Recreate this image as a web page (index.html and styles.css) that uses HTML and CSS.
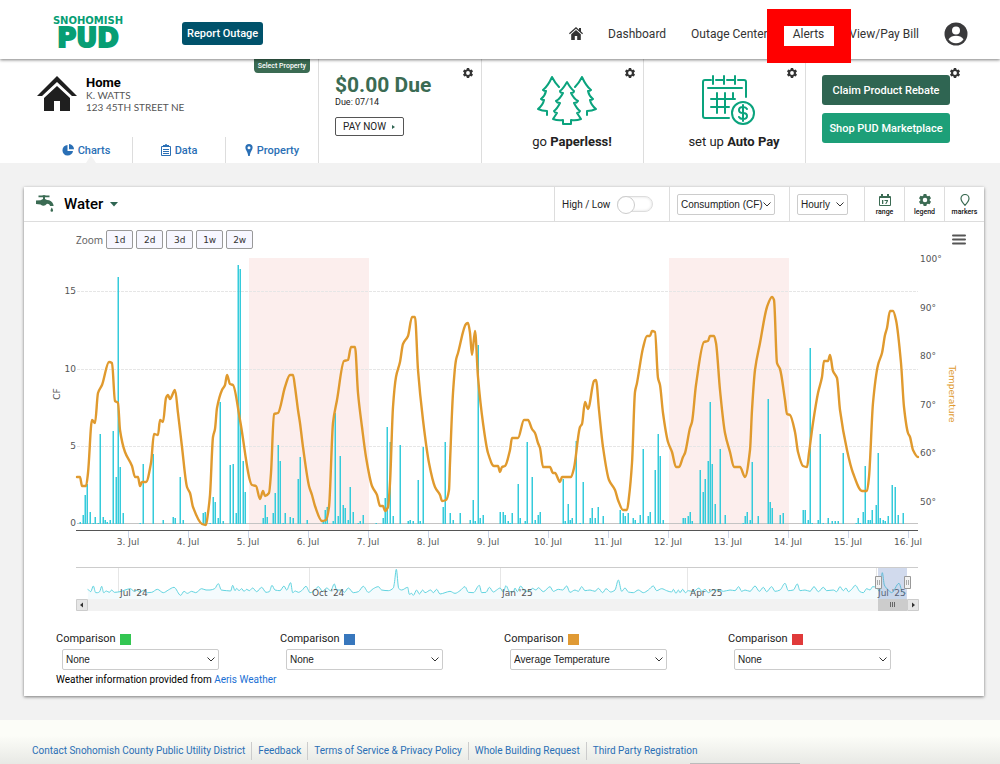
FILE: index.html
```
<!DOCTYPE html>
<html lang="en">
<head>
    <meta charset="UTF-8">
    <meta name="viewport" content="width=device-width, initial-scale=1.0">
    <title>Snohomish PUD - Charts</title>
    <link rel="stylesheet" href="styles.css">
</head>
<body>
    <header class="topbar">
        <a class="logo" href="#">
            <span class="logo-top">SNOHOMISH</span>
            <span class="logo-main">PUD</span>
        </a>
        <button class="report" type="button">Report Outage</button>
        <nav class="main-nav">
            <a href="#" aria-label="Home page">
                <svg width="14" height="13" viewBox="0 0 14 13"><path fill="#333" d="M7 0 0 6.3l.8.9L7 1.8l6.200 5.400.8-.9-2-1.800V.9h-2v1.800zM2.200 7.200V13h3.600V9h2.400v4h3.600V7.200L7 3z"/></svg>
            </a>
            <a href="#">Dashboard</a>
            <a href="#">Outage Center</a>
            <a class="alerts" href="#">Alerts</a>
            <a href="#">View/Pay Bill</a>
            <a class="avatar" href="#" aria-label="Account">
                <svg width="24" height="24" viewBox="0 0 24 24"><circle cx="12" cy="12" r="11.500" fill="#3a3a3c"/><circle cx="12" cy="8.500" r="4" fill="#fff"/><path fill="#fff" d="M4.500 17.300c1.600-2.500 4.500-3.500 7.500-3.500s5.900 1 7.500 3.500c-1.700 2.500-4.400 4-7.500 4s-5.800-1.500-7.500-4z"/></svg>
            </a>
        </nav>
    </header>

    <section class="summary">
        <div class="property">
            <button class="select-property" type="button">Select Property</button>
            <div class="address">
                <svg width="40" height="36" viewBox="0 0 40 36"><path fill="#1f1f1f" d="M20 0 0 20h5L20 6l15 14h5zM20 10 7 22v13h10V25h6v10h10V22z"/></svg>
                <div>
                    <h1>Home</h1>
                    <p>K. WATTS</p>
                    <p>123 45TH STREET NE</p>
                </div>
            </div>
            <nav class="tabs">
                <a class="active" href="#">
                    <svg width="12" height="12" viewBox="0 0 12 12"><path fill="#2a6fb5" d="M5.500 1A5.300 5.300 0 1 0 11 6.900H5.500zM7 0v5.300h5A5.200 5.200 0 0 0 7 0z"/></svg>
                    Charts
                </a>
                <a href="#">
                    <svg width="10" height="12" viewBox="0 0 10 12"><path fill="none" stroke="#2a6fb5" d="M.5 2.500h9v9h-9zM2 5.500h6M2 7.500h6M2 9.500h6"/><path fill="#2a6fb5" d="M2 1h2a1 1 0 0 1 2 0h2v2H2z"/></svg>
                    Data
                </a>
                <a href="#">
                    <svg width="8" height="12" viewBox="0 0 8 12"><path fill="#2a6fb5" fill-rule="evenodd" d="M4 0a3.600 3.600 0 0 0-3.600 3.700C.4 6 3 8 3.200 12h1.600C5 8 7.600 6 7.600 3.700A3.600 3.600 0 0 0 4 0zm0 2.200a1.500 1.500 0 1 1 0 3 1.500 1.500 0 0 1 0-3z"/></svg>
                    Property
                </a>
            </nav>
        </div>
        <div class="tile due">
            <button class="gear" type="button" aria-label="Bill settings"><svg width="10" height="10" viewBox="0 0 10 10"><use href="#gear"/></svg></button>
            <h2>$0.00 Due</h2>
            <p>Due: 07/14</p>
            <button class="pay" type="button">PAY NOW <svg width="4" height="4" viewBox="0 0 4 4"><path fill="#2f6552" d="M0 0l3 2-3 2z"/></svg></button>
        </div>
        <div class="tile promo">
            <button class="gear" type="button" aria-label="Paperless settings"><svg width="10" height="10" viewBox="0 0 10 10"><use href="#gear"/></svg></button>
            <svg width="60" height="50" viewBox="0 0 60 50" fill="none" stroke="#0aa37d" stroke-width="2" stroke-linejoin="round" stroke-linecap="round">
                <path d="M30 7q-4 7-7 9 0 2 3 2-3 6-7 8 1 2 4 2-3 6-6 8 1 2 3 2l-4 6q5 2 10 1v4h8v-4q5 1 10-1l-4-6q2 0 3-2-3-2-6-8 3 0 4-2-4-2-7-8 3 0 3-2-3-2-7-9z"/>
                <path d="M10 40v-4q-5 0-9-2 5-4 6-9-2 0-3-1 4-3 5-8-2 0-3-1 5-4 9-13 3 6 7 10M50 40v-4q5 0 9-2-5-4-6-9 2 0 3-1-4-3-5-8 2 0 3-1-5-4-9-13-3 6-7 10"/>
            </svg>
            <p>go <b>Paperless!</b></p>
        </div>
        <div class="tile promo">
            <button class="gear" type="button" aria-label="Auto pay settings"><svg width="10" height="10" viewBox="0 0 10 10"><use href="#gear"/></svg></button>
            <svg width="54" height="50" viewBox="0 0 54 50" fill="none" stroke="#0aa37d" stroke-width="2" stroke-linecap="round">
                <path d="M9 5H3q-2 0-2 2v34q0 2 2 2h24M14 5h7M25 5h7M36 5h6q2 0 2 2v15M11 1v8M22 1v8M33 1v8M6 13h34M9 24h24M9 32h18M15 18v20M23 18v20M31 18v6"/>
                <circle cx="41" cy="38" r="11"/>
                <path d="M45 34q-1-2-4-2-4 0-4 3t4 3 4 3-4 3q-3 0-4-2M41 30v16"/>
            </svg>
            <p>set up <b>Auto Pay</b></p>
        </div>
        <div class="tile actions">
            <button class="gear" type="button" aria-label="Offer settings"><svg width="10" height="10" viewBox="0 0 10 10"><use href="#gear"/></svg></button>
            <button class="rebate" type="button">Claim Product Rebate</button>
            <button class="market" type="button">Shop PUD Marketplace</button>
        </div>
    </section>

    <main>
        <section class="card">
            <div class="toolbar">
                <button class="meter" type="button">
                    <svg width="18" height="18" viewBox="0 0 18 18"><path fill="#3b6b53" d="M2.500.5h3.500L8 0l2 .5h3.500v1.800H9v1.700l2 1c3 0 5.500 1.500 6.500 5v1h-3.300q-.7-2.300-3.200-2.200Q8 12.500 4.500 9.500L0 9V5.500l4.500-.3L7 4V2.300H2.500zM15.800 12.500q1.300 2 1.300 3a1.300 1.300 0 0 1-2.600 0q0-1 1.300-3z"/></svg>
                    <span>Water</span>
                    <svg width="8" height="5" viewBox="0 0 8 5"><path fill="#2f6552" d="M0 0h8L4 4.500z"/></svg>
                </button>
                <label class="cell high-low">High / Low <input type="checkbox"></label>
                <div class="cell measure">
                    <select aria-label="Measure"><option>Consumption (CF)</option></select>
                </div>
                <div class="cell interval">
                    <select aria-label="Interval"><option>Hourly</option></select>
                </div>
                <button class="cell tool" type="button">
                    <svg width="12" height="12" viewBox="0 0 12 12"><path fill="none" stroke="#3b6b53" d="M.5 2.500h11v9H.5z"/><path fill="#3b6b53" d="M1 2h10v2H1zM2 0h2v3H2zM8 0h2v3H8zM3 6h1.300v4H3zM5.500 6H9v1L7.300 10H6.200l1.500-3H5.500z"/></svg>
                    range
                </button>
                <button class="cell tool" type="button">
                    <svg class="green-gear" width="12" height="12" viewBox="0 0 10 10"><use href="#gear"/></svg>
                    legend
                </button>
                <button class="cell tool" type="button">
                    <svg width="10" height="12" viewBox="0 0 10 12"><path fill="none" stroke="#3b6b53" stroke-width="1.200" d="M5 11.300Q1 7 1 4.500a4 4 0 0 1 8 0Q9 7 5 11.300z"/></svg>
                    markers
                </button>
            </div>

            <div class="zoom-row">
                <span>Zoom</span>
                <button type="button">1d</button>
                <button type="button">2d</button>
                <button type="button">3d</button>
                <button type="button">1w</button>
                <button type="button">2w</button>
                <button class="menu" type="button" aria-label="Chart menu"><svg width="14" height="11" viewBox="0 0 14 11"><path stroke="#555" stroke-width="2" stroke-linecap="round" d="M1 1.500h12M1 5.500h12M1 9.500h12"/></svg></button>
            </div>

            <svg class="chart" viewBox="24 252 960 364" role="img" aria-label="Hourly water consumption and temperature">
                <defs>
                    <path id="gear" fill-rule="evenodd" d="M3.900 0h2.200l.4 1.400.9.500L8.800 1.500l1.200 2-1.100 1v1l1.100 1-1.200 2-1.400-.4-.9.500L6.100 10H3.900l-.4-1.400-.9-.5-1.400.4-1.200-2 1.100-1v-1L0 3.500l1.200-2 1.400.4.900-.5zM5 3.100a1.900 1.900 0 1 0 0 3.800 1.900 1.900 0 0 0 0-3.800z"/>
                </defs>
                <g class="bands">
                    <path d="M249 258h120v272H249zM669 258h120v272H669z"/>
                </g>
                <g class="grid">
                    <path d="M77 291.500h841M77 369.500h841M77 446.500h841"/>
                </g>
                <path class="zero" d="M77 523.500h841"/>
                <g id="bars" class="bars"></g>
                <path id="temperature" class="temperature"/>
                <path class="ticks" d="M128.500 531v7M188.500 531v7M248.500 531v7M308.500 531v7M368.500 531v7M428.500 531v7M488.500 531v7M548.500 531v7M608.500 531v7M668.500 531v7M728.500 531v7M788.500 531v7M848.500 531v7M908.500 531v7"/>
                <path class="axis" d="M76 530.500h842"/>
                <g class="labels left">
                    <text x="76" y="294">15</text>
                    <text x="76" y="372">10</text>
                    <text x="76" y="449">5</text>
                    <text x="76" y="526">0</text>
                </g>
                <g class="labels">
                    <text x="920" y="262">100°</text>
                    <text x="920" y="311">90°</text>
                    <text x="920" y="359">80°</text>
                    <text x="920" y="408">70°</text>
                    <text x="920" y="456">60°</text>
                    <text x="920" y="505">50°</text>
                </g>
                <g id="days" class="labels days"></g>
                <text class="title" transform="translate(60 394) rotate(-90)">CF</text>
                <text class="title temp-title" transform="translate(949 394) rotate(90)">Temperature</text>

                <path class="nav-grid" d="M118.500 568v31M309.500 568v31M500.500 568v31M687.500 568v31M876.500 568v31"/>
                <path id="nav-area" class="nav-area"/>
                <path id="nav-line" class="nav-line"/>
                <path class="nav-border" d="M76 567.500h842"/>
                <g class="labels">
                    <text x="120" y="596">Jul '24</text>
                    <text x="312" y="596">Oct '24</text>
                    <text x="502" y="596">Jan '25</text>
                    <text x="690" y="596">Apr '25</text>
                    <text x="878" y="596">Jul '25</text>
                </g>
                <path class="nav-mask" d="M878 568h29v31h-29z"/>
                <path class="scroll-track" d="M88 599h819v12H88z"/>
                <path class="scroll-thumb" d="M878 599h29v12h-29z"/>
                <path class="scroll-button" d="M76.500 599.500h11v11h-11zM907.500 599.500h11v11h-11z"/>
                <path class="scroll-arrow" d="M83 602.500v5l-3-2.500zM912 602.500v5l3-2.500z"/>
                <path class="grip" d="M890.500 602v5M892.500 602v5M894.500 602v5"/>
                <path class="handle" d="M875.500 576.500h6v12h-6zM904.500 576.500h6v12h-6z"/>
                <path class="grip handle-grip" d="M877.500 580v5M879.500 580v5M906.500 580v5M908.500 580v5"/>
            </svg>

            <div class="comparisons">
                <div>
                    <label for="cmp1">Comparison <span class="swatch green"></span></label>
                    <select id="cmp1"><option>None</option></select>
                </div>
                <div>
                    <label for="cmp2">Comparison <span class="swatch blue"></span></label>
                    <select id="cmp2"><option>None</option></select>
                </div>
                <div>
                    <label for="cmp3">Comparison <span class="swatch orange"></span></label>
                    <select id="cmp3"><option>Average Temperature</option></select>
                </div>
                <div>
                    <label for="cmp4">Comparison <span class="swatch red"></span></label>
                    <select id="cmp4"><option>None</option></select>
                </div>
            </div>
            <p class="weather">Weather information provided from <a href="#">Aeris Weather</a></p>
        </section>
    </main>

    <footer>
        <a href="#">Contact Snohomish County Public Utility District</a>
        <a href="#">Feedback</a>
        <a href="#">Terms of Service &amp; Privacy Policy</a>
        <a href="#">Whole Building Request</a>
        <a href="#">Third Party Registration</a>
    </footer>
    <script src="chart.js"></script>
</body>
</html>
```
FILE: styles.css
```
* {
    box-sizing: border-box;
}
body {
    margin: 0;
    min-height: 100vh;
    display: flex;
    flex-direction: column;
    font-family: Roboto, "Liberation Sans", sans-serif;
    font-size: 12px;
    color: #222;
    background: #f2f2f2;
}
h1, h2, p {
    margin: 0;
}
a {
    color: #2a6fb5;
    text-decoration: none;
}
button {
    font-family: inherit;
    border: 0;
    padding: 0;
    background: none;
    cursor: pointer;
}
svg {
    display: block;
    flex: none;
}
select {
    appearance: none;
    height: 21px;
    padding: 0 16px 0 3px;
    border: 1px solid #ccc;
    border-radius: 2px;
    font-family: "Liberation Sans", Arial, sans-serif;
    font-size: 10px;
    color: #222;
    background: #fff url("data:image/svg+xml,%3Csvg xmlns='http://www.w3.org/2000/svg' width='8' height='5' viewBox='0 0 8 5'%3E%3Cpath d='M.5.5 4 4 7.500.5' fill='none' stroke='%23333'/%3E%3C/svg%3E") no-repeat right 3px center;
}

/* top bar */
.topbar {
    position: relative;
    z-index: 2;
    display: flex;
    align-items: center;
    height: 59px;
    padding: 8px 32px 0 41px;
    background: #fff;
    box-shadow: 0 1px 3px rgba(0, 0, 0, 0.5);
}
.logo {
    display: flex;
    flex-direction: column;
    align-items: center;
    width: 94px;
    font-family: "DejaVu Sans", sans-serif;
    font-weight: bold;
    color: #079e74;
}
.logo-top {
    font-size: 10px;
    line-height: 10px;
}
.logo-main {
    font-size: 26px;
    line-height: 25px;
    -webkit-text-stroke: 2px #079e74;
}
.report {
    height: 23px;
    margin-left: 47px;
    padding: 0 5px;
    border-radius: 3px;
    font-size: 11px;
    font-weight: 500;
    color: #fff;
    background: #00526b;
}
.main-nav {
    display: flex;
    align-items: center;
    gap: 25px;
    margin-left: auto;
}
.main-nav a {
    font-size: 12px;
    line-height: 14px;
    color: #333;
}
.alerts {
    position: relative;
}
.alerts::after {
    content: '';
    position: absolute;
    top: -18px;
    left: -26px;
    right: -27px;
    bottom: -22px;
    border: 17px solid #f00;
}

/* account summary */
.summary {
    display: grid;
    grid-template-columns: 319fr 163fr 162fr 162fr 194fr;
    height: 104px;
    background: #fff;
}
.property, .tile {
    position: relative;
    border-right: 1px solid #ddd;
}
.property {
    display: flex;
    flex-direction: column;
    justify-content: space-between;
}
.select-property {
    position: absolute;
    top: 0;
    right: 8px;
    height: 14px;
    padding: 0 4px;
    border-radius: 0 0 4px 4px;
    font-size: 7px;
    font-weight: 500;
    color: #fff;
    background: #3b6b53;
}
.address {
    display: flex;
    gap: 9px;
    padding: 17px 0 0 37px;
}
.address h1 {
    font-size: 13px;
    line-height: 13px;
    color: #000;
}
.address p {
    font-family: Lato, sans-serif;
    font-size: 10px;
    line-height: 12px;
    color: #555;
}
.tabs {
    display: flex;
    padding-left: 40px;
}
.tabs a {
    position: relative;
    display: flex;
    flex: 1;
    align-items: center;
    justify-content: center;
    gap: 4px;
    height: 26px;
    font-size: 11px;
    font-weight: 500;
}
.tabs a + a {
    border-left: 1px solid #ddd;
}
.tabs .active::after {
    content: '';
    position: absolute;
    bottom: 0;
    left: 50%;
    border: 5px solid transparent;
    border-top: 0;
    border-bottom: 8px solid #f2f2f2;
}
.gear {
    position: absolute;
    top: 9px;
    right: 8px;
    fill: #333;
}
.due {
    padding: 15px 0 0 16px;
}
.due h2 {
    font-size: 21px;
    line-height: 22px;
    color: #3b6b53;
}
.due p {
    font-size: 9px;
    line-height: 13px;
}
.pay {
    display: flex;
    align-items: center;
    gap: 6px;
    height: 19px;
    margin-top: 8px;
    padding: 0 7px;
    border: 1px solid #555;
    border-radius: 2px;
    font-size: 10px;
    color: #222;
}
.promo {
    display: flex;
    flex-direction: column;
    align-items: center;
    padding: 16px 0 0 9px;
}
.promo p {
    margin-top: 9px;
    padding-left: 10px;
    font-size: 13px;
    line-height: 16px;
}
.actions {
    display: flex;
    flex-direction: column;
    gap: 8px;
    padding: 16px 50px 0 16px;
    border-right: 0;
}
.actions .gear {
    right: 40px;
}
.rebate, .market {
    height: 30px;
    border-radius: 3px;
    font-size: 11px;
    font-weight: 500;
    color: #fff;
    white-space: nowrap;
    background: #2f6552;
}
.market {
    background: #1d9f78;
}

/* chart card */
main {
    flex: 1;
    padding: 24px 16px 24px 24px;
}
.card {
    padding-bottom: 9px;
    background: #fff;
    box-shadow: 0 1px 3px rgba(0, 0, 0, 0.5);
}
.toolbar {
    display: flex;
    height: 35px;
    border-bottom: 1px solid #ddd;
}
.meter {
    display: flex;
    align-items: center;
    gap: 7px;
    margin-right: auto;
    padding-left: 12px;
}
.meter span {
    padding-left: 3px;
    font-size: 15px;
    font-weight: 500;
    color: #000;
}
.cell {
    display: flex;
    align-items: center;
    border-left: 1px solid #ddd;
    padding: 0 7px;
}
.high-low {
    gap: 7px;
    width: 115px;
    font-size: 10px;
}
.high-low input {
    appearance: none;
    display: flex;
    width: 36px;
    height: 16px;
    margin: 0;
    border: 1px solid #ddd;
    border-radius: 8px;
    background: #fff;
    box-shadow: inset 0 0 3px #ddd;
}
.high-low input::before {
    content: '';
    width: 16px;
    height: 16px;
    margin: -1px;
    border: 1px solid #ccc;
    border-radius: 50%;
    background: #fff;
}
.measure {
    width: 120px;
}
.measure select {
    width: 98px;
    padding-right: 0;
}
.interval {
    width: 75px;
}
.interval select {
    width: 51px;
}
.tool {
    flex-direction: column;
    justify-content: center;
    gap: 2px;
    width: 40px;
    padding: 2px 0 0;
    font-size: 7px;
    line-height: 9px;
    font-weight: 500;
    color: #111;
}
.green-gear {
    fill: #3b6b53;
}
.zoom-row {
    display: flex;
    align-items: center;
    gap: 3px;
    padding: 8px 18px 3px 52px;
    font-family: "Noto Sans", sans-serif;
    font-size: 10px;
    line-height: 12px;
    color: #666;
}
.zoom-row button {
    width: 27px;
    height: 19px;
    border: 1px solid #999;
    border-radius: 2px;
    font-family: "DejaVu Sans", sans-serif;
    font-size: 9px;
    color: #333;
    background: #f7f7ff;
}
.zoom-row .menu {
    width: auto;
    margin-left: auto;
    border: 0;
    background: none;
}
.chart {
    width: 100%;
    height: auto;
}
.chart text {
    font-family: "DejaVu Sans", sans-serif;
    font-size: 9px;
    fill: #555;
}
.bands {
    fill: #fceeed;
}
.grid {
    fill: none;
    stroke: #e6e6e6;
    stroke-dasharray: 3 1;
}
.zero {
    stroke: #c4c4c4;
}
.bars {
    fill: #35cbdb;
}
.temperature {
    fill: none;
    stroke: #e09a2e;
    stroke-width: 2.4;
    stroke-linejoin: round;
    stroke-linecap: round;
}
.ticks {
    stroke: #ccd6eb;
}
.axis {
    stroke: #555;
}
.left {
    text-anchor: end;
}
.days, .title {
    text-anchor: middle;
}
.chart .temp-title {
    fill: #e09a2e;
}
.nav-grid {
    stroke: #e6e6e6;
}
.nav-border {
    stroke: #ccc;
}
.nav-area {
    fill: #f4fbfd;
}
.nav-line {
    fill: none;
    stroke: #62d4e0;
}
.nav-mask {
    fill: #6685c2;
    fill-opacity: 0.3;
}
.scroll-track {
    fill: #f2f2f2;
}
.scroll-thumb {
    fill: #ccc;
}
.scroll-button {
    fill: #e6e6e6;
    stroke: #ccc;
}
.scroll-arrow {
    fill: #333;
}
.handle {
    fill: #f2f2f2;
    stroke: #999;
}
.grip {
    stroke: #666;
}
.handle-grip {
    stroke: #aaa;
}

/* comparison pickers */
.comparisons {
    display: grid;
    grid-template-columns: repeat(4, 1fr);
    padding: 16px 32px 0;
}
.comparisons label {
    display: flex;
    align-items: center;
    gap: 4px;
    margin-bottom: 3px;
    font-size: 11px;
    line-height: 14px;
}
.comparisons select {
    width: 70%;
    margin-left: 6px;
}
.swatch {
    width: 11px;
    height: 11px;
}
.green {
    background: #33c652;
}
.blue {
    background: #3877bd;
}
.orange {
    background: #e09a34;
}
.red {
    background: #e03a3a;
}
.weather {
    padding: 3px 32px 0;
    font-size: 10px;
    line-height: 14px;
    color: #000;
}
.weather a {
    color: #1a6fd4;
}

footer {
    position: relative;
    display: flex;
    align-items: center;
    height: 44px;
    padding: 17px 26px 0;
    background: linear-gradient(#fcfdf8 35%, #e8e9e5);
}
footer::after {
    content: '';
    position: absolute;
    left: 69%;
    bottom: 0;
    width: 11%;
    height: 1px;
    background: #bbb;
}
footer a {
    padding: 0 6px;
    font-size: 10px;
    line-height: 18px;
}
footer a + a {
    border-left: 1px solid #ccc;
}
```
FILE: chart.js
```
// water use, one [x, top] pair per hour with any flow
const usage = [
    [80,522],[83,515],[85,495],[87,484],[90,512],[93,523],[95,517],[98,523],[100,434],[103,517],[105,520],[107,522],[110,520],
    [113,431],[116,477],[118,277],[120,467],[123,513],[140,523],[143,464],[153,454],[163,520],[173,517],[175,518],[180,477],
    [183,520],[203,513],[205,512],[210,523],[213,497],[215,502],[218,518],[220,402],[223,521],[230,465],[233,464],[236,513],
    [238,265],[240,269],[243,461],[245,492],[263,518],[265,505],[267,517],[273,513],[275,493],[278,445],[280,461],[283,523],
    [285,513],[290,517],[293,518],[298,479],[300,457],[307,520],[323,521],[325,510],[327,507],[333,521],[335,413],[338,516],
    [340,456],[343,505],[345,508],[348,520],[350,487],[353,512],[358,523],[360,521],[363,515],[376,523],[383,518],[385,498],
    [387,427],[390,442],[393,516],[400,445],[408,521],[410,520],[413,521],[418,480],[420,521],[423,447],[443,507],[445,442],
    [450,513],[453,520],[460,513],[470,520],[473,500],[475,521],[478,345],[480,518],[483,515],[500,512],[503,512],[505,515],
    [508,521],[510,523],[512,513],[518,484],[520,518],[525,521],[527,442],[532,477],[535,520],[538,515],[540,512],[563,479],
    [565,521],[568,504],[570,520],[572,518],[576,441],[580,523],[583,482],[590,518],[592,508],[595,518],[598,507],[603,516],
    [620,510],[623,513],[625,516],[628,513],[633,518],[635,520],[638,523],[640,515],[643,449],[648,516],[650,512],[655,470],
    [658,434],[660,456],[663,520],[683,518],[685,518],[688,516],[690,512],[692,521],[700,470],[703,492],[705,479],[708,461],
    [710,402],[712,464],[715,504],[720,449],[725,515],[743,523],[745,516],[747,512],[750,520],[752,462],[758,516],[768,399],
    [770,502],[772,508],[780,515],[783,513],[803,510],[805,510],[808,520],[810,348],[812,523],[818,520],[820,434],[823,523],
    [828,518],[832,521],[835,521],[838,521],[843,453],[856,523],[858,518],[860,523],[863,512],[865,466],[868,520],[870,520],
    [872,510],[876,505],[878,453],[880,518],[883,520],[885,521],[888,516],[892,485],[895,487],[898,515],[903,513]
];

const temperature = [
    [77,477],[80,477],[82,486],[86,486],[88,473],[92,420],[95,423],[98,393],[102,385],[109,362],[112,363],[115,401],[118,403],
    [120,430],[125,452],[132,466],[135,477],[138,477],[140,486],[142,482],[146,482],[151,463],[154,434],[158,435],[160,420],
    [163,422],[166,398],[168,395],[170,399],[175,390],[178,413],[182,447],[187,487],[190,493],[193,507],[202,524],[206,525],
    [208,513],[210,495],[213,437],[215,429],[217,408],[222,390],[225,385],[227,375],[230,384],[233,385],[240,420],[252,485],
    [256,486],[260,499],[263,491],[265,496],[269,493],[271,473],[274,414],[278,413],[285,387],[290,375],[293,375],[295,387],
    [298,410],[300,423],[303,447],[309,486],[312,495],[315,506],[322,521],[326,520],[329,507],[333,423],[337,400],[344,361],
    [348,360],[351,347],[355,347],[358,393],[362,427],[366,457],[372,486],[377,495],[380,506],[383,506],[385,511],[388,507],
    [390,483],[393,407],[396,377],[400,362],[403,344],[408,336],[412,317],[415,317],[418,370],[423,420],[429,463],[435,487],
    [440,495],[442,501],[446,500],[449,490],[450,463],[453,393],[456,360],[458,353],[466,324],[468,323],[470,333],[472,355],
    [475,331],[478,377],[483,423],[488,453],[494,466],[498,466],[500,472],[502,467],[505,466],[510,450],[512,438],[518,438],
    [524,420],[528,420],[532,429],[535,433],[538,443],[540,448],[543,467],[550,467],[553,473],[555,473],[560,482],[562,477],
    [571,477],[574,468],[580,427],[582,424],[585,402],[588,409],[594,381],[596,380],[599,410],[603,447],[609,480],[615,490],
    [618,500],[623,510],[627,510],[629,497],[632,463],[635,392],[637,383],[643,348],[647,336],[650,336],[652,331],[655,332],
    [658,378],[660,385],[663,413],[668,442],[672,452],[676,467],[679,467],[683,457],[685,453],[690,428],[692,422],[696,385],
    [704,342],[708,341],[710,336],[714,336],[716,343],[720,390],[725,433],[730,452],[734,467],[740,467],[745,477],[750,450],
    [752,410],[755,370],[760,343],[767,307],[772,297],[774,300],[777,363],[780,369],[785,400],[787,414],[790,415],[795,432],
    [798,452],[803,466],[807,467],[809,453],[813,423],[818,393],[822,377],[824,361],[828,361],[830,355],[833,371],[837,378],
    [840,410],[847,450],[853,473],[862,491],[867,491],[869,477],[873,403],[878,365],[882,353],[885,335],[887,328],[890,311],
    [893,311],[896,320],[901,363],[904,407],[908,433],[910,437],[913,450],[918,457]
];

// navigator series, kept at three units per pixel
const year = [
    [83,88],[92,95],[100,78],[107,98],[113,98],[119,95],[125,79],[131,98],[139,93],[148,97],[155,90],[163,97],[180,95],[195,90],
    [212,86],[222,94],[232,90],[240,97],[252,90],[262,98],[275,97],[292,88],[310,98],[325,90],[342,82],[362,106],[372,94],
    [382,100],[395,94],[407,98],[425,86],[438,90],[450,90],[464,86],[475,71],[484,90],[500,92],[512,93],[518,76],[525,92],
    [530,85],[537,92],[545,86],[552,94],[560,88],[568,92],[578,84],[590,95],[605,82],[618,97],[628,95],[636,76],[645,90],
    [660,92],[672,78],[680,90],[692,68],[698,98],[706,93],[715,97],[725,92],[738,79],[750,98],[760,95],[775,80],[788,94],
    [800,84],[812,92],[823,72],[830,90],[845,90],[853,97],[865,84],[880,98],[895,95],[910,79],[925,97],[940,86],[955,80],
    [965,90],[985,92],[1000,84],[1003,70],[1009,28],[1016,85],[1025,90],[1043,82],[1048,103],[1055,100],[1060,106],[1070,90],
    [1078,102],[1088,90],[1095,98],[1112,90],[1120,98],[1130,88],[1140,102],[1155,98],[1170,94],[1185,100],[1200,92],[1215,80],
    [1225,97],[1240,98],[1258,76],[1265,98],[1278,97],[1288,82],[1300,96],[1310,90],[1320,84],[1330,96],[1338,77],[1348,94],
    [1360,96],[1365,84],[1372,95],[1382,78],[1395,94],[1410,92],[1417,85],[1428,90],[1435,83],[1450,95],[1470,80],[1480,94],
    [1495,88],[1508,90],[1520,78],[1530,97],[1545,90],[1555,94],[1565,80],[1575,92],[1590,90],[1605,94],[1615,85],[1628,98],
    [1638,86],[1652,96],[1665,90],[1675,60],[1685,94],[1695,84],[1705,96],[1720,98],[1735,90],[1750,98],[1765,90],[1780,78],
    [1790,92],[1805,86],[1820,92],[1835,96],[1840,88],[1848,100],[1855,90],[1860,98],[1868,88],[1876,98],[1885,92],[1900,95],
    [1917,84],[1925,94],[1935,88],[1945,98],[1960,90],[1975,90],[1990,94],[2010,90],[2025,92],[2036,80],[2045,94],[2055,90],
    [2070,94],[2085,78],[2098,94],[2110,82],[2120,95],[2135,80],[2145,94],[2160,90],[2175,70],[2185,92],[2200,90],[2212,72],
    [2220,92],[2235,90],[2250,94],[2262,80],[2275,95],[2290,82],[2300,92],[2320,90],[2330,95],[2340,80],[2350,92],[2358,84],
    [2365,95],[2375,88],[2386,76],[2400,95],[2410,98],[2420,86],[2430,90],[2438,80],[2450,82],[2458,94],[2463,60],[2467,38],
    [2473,75],[2485,90],[2495,98],[2517,70],[2527,95],[2538,100]
].map(([x, y]) => [60 + x / 3, 560 + y / 3]);

const SVG = 'http://www.w3.org/2000/svg';

// smooth line that never overshoots a peak or a flat run
function spline(points) {
    const slope = (a, b) => (b[1] - a[1]) / (b[0] - a[0]);
    const m = points.map((p, i) => {
        if (i === 0 || i === points.length - 1) return 0;
        const s1 = slope(points[i - 1], p);
        const s2 = slope(p, points[i + 1]);
        return s1 * s2 <= 0 ? 0 : 2 * s1 * s2 / (s1 + s2);
    });
    let d = 'M' + points[0].join(' ');
    for (let i = 1; i < points.length; i++) {
        const a = points[i - 1];
        const b = points[i];
        const dx = (b[0] - a[0]) / 3;
        d += `C${a[0] + dx} ${a[1] + m[i - 1] * dx} ${b[0] - dx} ${b[1] - m[i] * dx} ${b[0]} ${b[1]}`;
    }
    return d;
}

usage.forEach(([x, top]) => {
    const bar = document.createElementNS(SVG, 'rect');
    bar.setAttribute('x', x - 0.5);
    bar.setAttribute('y', top);
    bar.setAttribute('width', 1.5);
    bar.setAttribute('height', 524 - top);
    document.getElementById('bars').appendChild(bar);
});

for (let day = 3; day <= 16; day++) {
    const label = document.createElementNS(SVG, 'text');
    label.setAttribute('x', 128 + (day - 3) * 60);
    label.setAttribute('y', 545);
    label.textContent = day + '. Jul';
    document.getElementById('days').appendChild(label);
}

document.getElementById('temperature').setAttribute('d', spline(temperature));
document.getElementById('nav-line').setAttribute('d', spline(year));
document.getElementById('nav-area').setAttribute('d', spline(year) + 'V599H88Z');
```
